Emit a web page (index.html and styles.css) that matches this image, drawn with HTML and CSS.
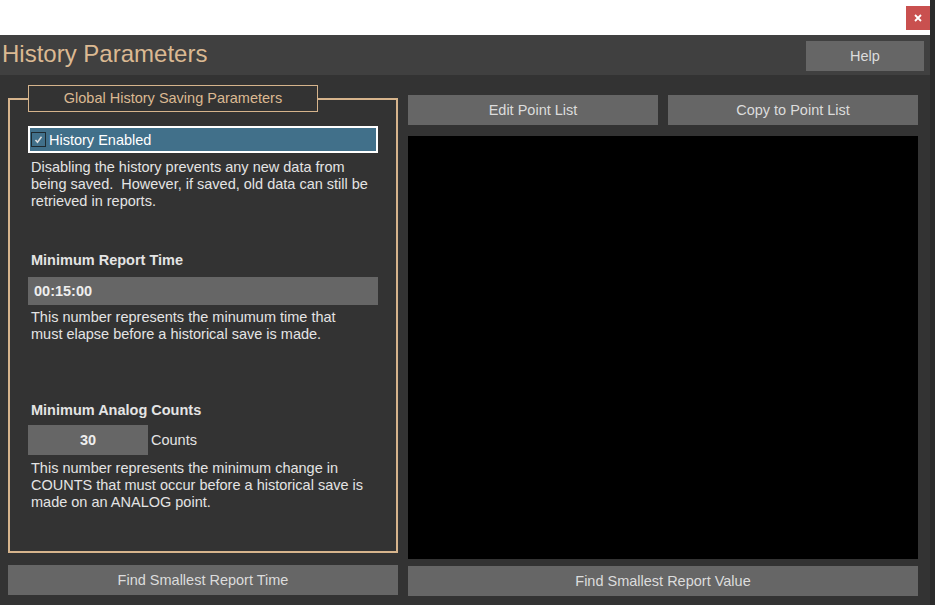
FILE: index.html
```html
<!DOCTYPE html>
<html lang="en">

<head>
    <meta charset="UTF-8">
    <meta name="viewport" content="width=device-width, initial-scale=1.0">
    <title>History Parameters</title>
    <link rel="stylesheet" href="styles.css">
</head>

<body>
    <div class="app">
        <div class="titlebar">
            <button type="button" class="btn-close" aria-label="Close">
                <svg width="8" height="8" viewBox="0 0 8 8">
                    <path d="M1 1L7 7M7 1L1 7" stroke="#fff" stroke-width="1.8" />
                </svg>
            </button>
        </div>

        <div class="header">
            <h1 class="title">History Parameters</h1>
            <button type="button" class="btn btn-help">Help</button>
        </div>

        <div class="main">
            <!-- 왼쪽 -->
            <div class="col col-left">
                <fieldset class="group">
                    <legend class="group-title"><span>Global History Saving Parameters</span></legend>

                    <label class="check-row">
                        <span class="check-box">
                            <svg width="11" height="11" viewBox="0 0 11 11">
                                <path d="M2.5 6L4.5 8.3L8.5 2.8" fill="none" stroke="#dedede" stroke-width="1.5" />
                            </svg>
                        </span>
                        History Enabled
                    </label>
                    <p class="desc desc-first">Disabling the history prevents any new data from being saved.&nbsp; However, if saved, old data can still be retrieved in reports.</p>

                    <h2 class="label label-time">Minimum Report Time</h2>
                    <div class="field field-time">00:15:00</div>
                    <p class="desc desc-time">This number represents the minumum time that must elapse before a historical save is made.</p>

                    <h2 class="label label-counts">Minimum Analog Counts</h2>
                    <div class="field-row">
                        <div class="field field-counts">30</div>
                        <span class="unit">Counts</span>
                    </div>
                    <p class="desc desc-counts">This number represents the minimum change in COUNTS that must occur before a historical save is made on an ANALOG point.</p>
                </fieldset>
                <button type="button" class="btn btn-wide btn-left">Find Smallest Report Time</button>
            </div>

            <!-- 오른쪽 -->
            <div class="col col-right">
                <div class="btn-group">
                    <button type="button" class="btn">Edit Point List</button>
                    <button type="button" class="btn">Copy to Point List</button>
                </div>
                <div class="point-list"></div>
                <button type="button" class="btn btn-wide btn-right">Find Smallest Report Value</button>
            </div>
        </div>
    </div>
</body>

</html>
```

FILE: styles.css
```css
html,
body {
    margin: 0;
    padding: 0;
    height: 605px;
    overflow: hidden;
}

body {
    background: #2b2b2b;
    font-family: "Liberation Sans", Arial, sans-serif;
    font-size: 14.5px;
    color: #e4e4e4;
}

button {
    cursor: pointer;
    border: none;
    font-family: inherit;
    font-size: 14.5px;
    padding: 0;
}

.app {
    width: 930px;
    height: 605px;
    background: #333;
    display: flex;
    flex-direction: column;
}

/* 상단 흰색 바 */
.titlebar {
    height: 35px;
    background: #fff;
    display: flex;
    justify-content: flex-end;
    align-items: flex-start;
}

.btn-close {
    width: 24px;
    height: 24px;
    margin-top: 6px;
    background: #c9504f;
    display: flex;
    align-items: center;
    justify-content: center;
}

/* 헤더 */
.header {
    height: 40px;
    background: #404040;
    display: flex;
    justify-content: space-between;
    align-items: flex-start;
}

.title {
    margin: 0;
    padding-left: 2px;
    font-size: 24px;
    font-weight: normal;
    line-height: 38px;
    color: #dbb992;
}

.btn {
    height: 30px;
    background: #666;
    color: #dcdcdc;
}

.btn-help {
    width: 118px;
    margin: 6px 6px 0 0;
}

/* 본문 */
.main {
    flex: 1;
    display: grid;
    grid-template-columns: 390px 510px;
    column-gap: 10px;
    padding-left: 8px;
}

.col {
    display: flex;
    flex-direction: column;
}

.col-left {
    padding: 10px 0;
}

.col-right {
    padding: 20px 0 9px;
}

.btn-wide {
    width: 100%;
    flex-shrink: 0;
}

.btn-left {
    margin-top: 12px;
}

.btn-right {
    margin-top: 7px;
}

/* 그룹 박스 */
.group {
    flex: 1;
    margin: 0;
    min-width: 0;
    border: 2px solid #d6b48c;
    padding: 14px 18px 0 18px;
}

/* legend 의 text-align 은 legend 위치를 바꾸므로 안쪽 span 으로 가운데 정렬 */
.group-title {
    box-sizing: border-box;
    width: 290px;
    height: 27px;
    padding: 0;
    border: 1px solid #d6b48c;
    text-align: left;
    line-height: 25px;
    color: #dbb992;
}

.group-title span {
    display: block;
    text-align: center;
}

.check-row {
    box-sizing: border-box;
    display: flex;
    align-items: center;
    width: 350px;
    height: 27px;
    border: 2px solid #fff;
    background: #41708a;
    color: #fff;
    padding-left: 1px;
}

.check-box {
    box-sizing: border-box;
    width: 15px;
    height: 15px;
    margin-right: 3px;
    border: 1px solid #1e2a30;
    display: flex;
    align-items: center;
    justify-content: center;
}

.desc {
    margin: 0;
    padding-left: 3px;
    line-height: 17px;
    width: 338.5px;
}

.desc-first {
    margin-top: 5.5px;
}

.label {
    margin: 0;
    padding-left: 3px;
    font-size: 14.5px;
    line-height: 17px;
    color: #e4e4e4;
}

.label-time {
    margin-top: 42px;
}

.label-counts {
    margin-top: 59px;
}

.field {
    box-sizing: border-box;
    background: #666;
    font-weight: bold;
    color: #eee;
}

.field-time {
    width: 350px;
    height: 28px;
    line-height: 28px;
    margin-top: 8.5px;
    padding-left: 6px;
}

.desc-time {
    margin-top: 3.5px;
}

.field-row {
    display: flex;
    align-items: center;
    margin-top: 6.5px;
}

.field-counts {
    width: 120px;
    height: 30px;
    line-height: 30px;
    text-align: center;
}

.unit {
    margin-left: 3px;
}

.desc-counts {
    margin-top: 4.5px;
}

/* 오른쪽 영역 */
.btn-group {
    display: grid;
    grid-template-columns: 1fr 1fr;
    column-gap: 10px;
}

.point-list {
    flex: 1;
    margin-top: 11px;
    background: #000;
}
```
